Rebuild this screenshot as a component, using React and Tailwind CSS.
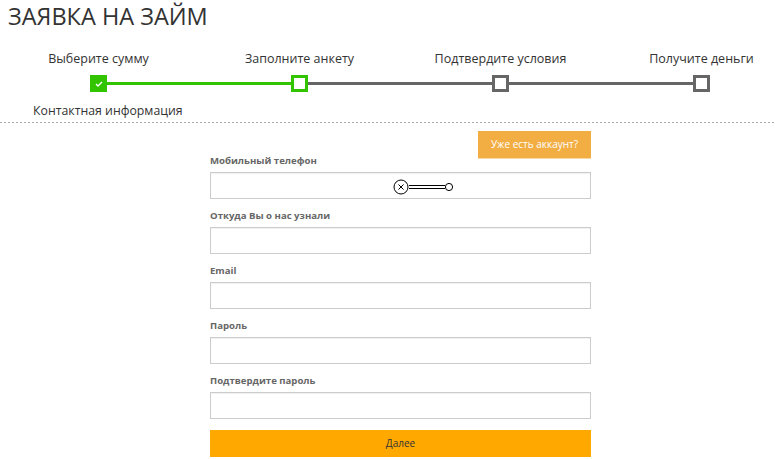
import React from "react";

const font = { fontFamily: '"Open Sans", "Liberation Sans", sans-serif' };

function Field({ label, first, children }) {
  return (
    <div className={first ? "-mt-1" : "mt-[10px]"}>
      <div className="text-[9.6px] leading-[14px] font-bold text-[#666]">{label}</div>
      <div className="mt-1 h-[27px] border border-[#ccc] bg-white shadow-[inset_0_1px_1px_rgba(0,0,0,0.06)] relative">
        {children}
      </div>
    </div>
  );
}

export default function App() {
  const steps = ["Выберите сумму", "Заполните анкету", "Подтвердите условия", "Получите деньги"];
  return (
    <div className="w-[775px] h-[459px] bg-white overflow-hidden text-[#333]" style={font}>
      <h1 className="pl-[8px] text-[23.5px] leading-[32px] font-normal text-[#333]">ЗАЯВКА НА ЗАЙМ</h1>

      <div className="mt-[18px] ml-[-2px] grid grid-cols-[201px_201px_201px_201px] text-[12.5px] leading-[18px] text-[#333]">
        {steps.map((s) => (
          <div key={s} className="text-center whitespace-nowrap">{s}</div>
        ))}
      </div>

      <div className="mt-[7px] pl-[90px] flex items-center">
        <div className="w-[17px] h-[17px] bg-[#33c400] flex items-center justify-center">
          <svg width="8" height="6" viewBox="0 0 8 6">
            <path d="M1 3 L3 5 L7 1" stroke="#fff" strokeWidth="1.4" fill="none" />
          </svg>
        </div>
        <div className="w-[184px] h-[3px] bg-[#33c400]" />
        <div className="w-[17px] h-[17px] border-[3px] border-[#33c400] bg-white" />
        <div className="w-[184px] h-[3px] bg-[#666]" />
        <div className="w-[17px] h-[17px] border-[3px] border-[#666] bg-white" />
        <div className="w-[184px] h-[3px] bg-[#666]" />
        <div className="w-[17px] h-[17px] border-[3px] border-[#666] bg-white" />
      </div>

      <div className="mt-[10px] pl-[33px] text-[12.3px] leading-[18px] text-[#333]">Контактная информация</div>

      <div className="mt-[2px] h-px bg-[linear-gradient(to_right,#aaa_50%,transparent_50%)] bg-[length:4px_1px]" />

      <div className="ml-[210px] w-[381px] mt-[8px]">
        <div className="flex justify-end">
          <button className="w-[113px] h-[27px] bg-[#f2ae43] text-white text-[10px] shadow-[0_1px_0_#f7d9a6]">
            Уже есть аккаунт?
          </button>
        </div>
        <Field label="Мобильный телефон" first>
          <svg className="absolute left-[182px] top-[6px]" width="64" height="16" viewBox="0 0 64 16">
            <circle cx="8" cy="8" r="7" stroke="#000" strokeWidth="1" fill="none" />
            <path d="M5.5 5.5 L10.5 10.5 M10.5 5.5 L5.5 10.5" stroke="#000" strokeWidth="1" />
            <path d="M16 6.5 H52 M16 9.5 H52" stroke="#000" strokeWidth="1.1" />
            <circle cx="56" cy="8" r="3.6" stroke="#000" strokeWidth="1" fill="none" />
          </svg>
        </Field>
        <Field label="Откуда Вы о нас узнали" />
        <Field label="Email" />
        <Field label="Пароль" />
        <Field label="Подтвердите пароль" />
        <button className="mt-[11px] w-full h-[27px] bg-[#ffa800] text-[#333] text-[10px]">Далее</button>
      </div>
    </div>
  );
}
